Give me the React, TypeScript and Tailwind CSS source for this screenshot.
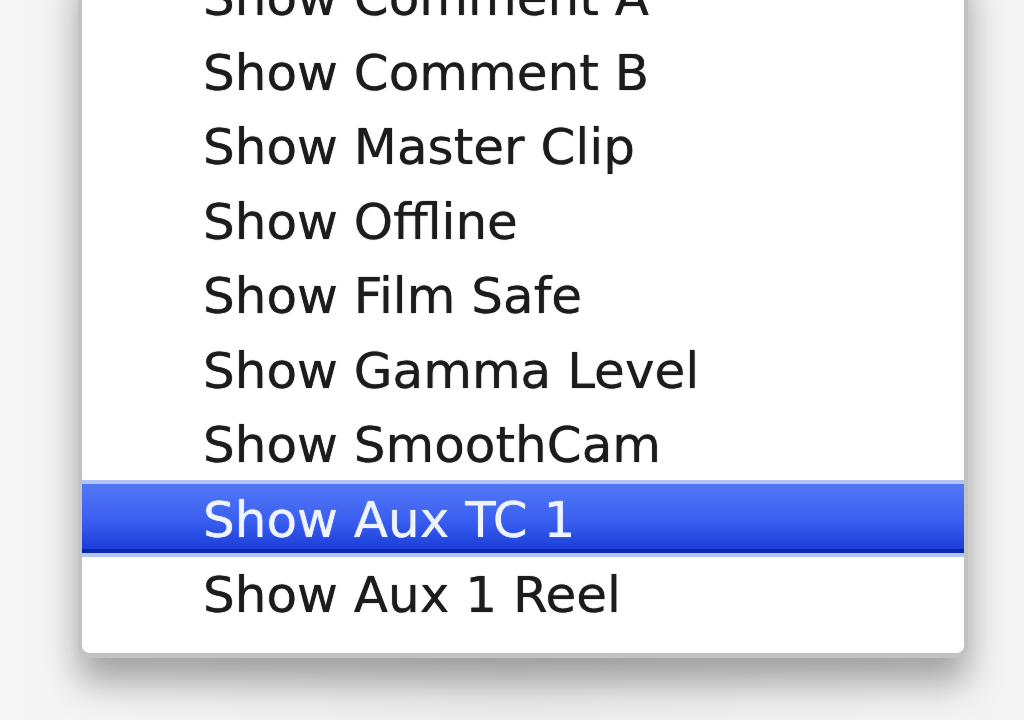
import React from 'react';

const items = [
  'Show Comment A',
  'Show Comment B',
  'Show Master Clip',
  'Show Offline',
  'Show Film Safe',
  'Show Gamma Level',
  'Show SmoothCam',
  'Show Aux TC 1',
  'Show Aux 1 Reel',
];

const selected = 'Show Aux TC 1';

const MenuRow: React.FC<{ label: string; active: boolean }> = ({ label, active }) => {
  if (active) {
    return (
      <div className="h-[77px] -my-[1px] border-y-[4px] border-y-[#b3c4f6] bg-gradient-to-b from-[#5378f6] via-[#3b60f0] to-[#1838d6] shadow-[inset_0_-4px_0_#0b28a8] flex items-center pl-[121px] pt-[4px]">
        <span className="text-[#eef3ff] blur-[0.4px] [text-shadow:0_0_1px_#eef3ff]">{label}</span>
      </div>
    );
  }
  return (
    <div className="h-[74.5px] flex items-center pl-[121px] pt-[4px]">
      <span className="text-[#1c1c1c] blur-[0.4px] [text-shadow:0_0_1px_#1c1c1c]">{label}</span>
    </div>
  );
};

export default function App() {
  return (
    <div className="w-[1024px] h-[720px] overflow-hidden bg-gradient-to-r from-[#f6f6f6] via-[#ececec] to-[#f4f4f4]">
      <div className="ml-[78px] w-[890px] -mt-[41px] bg-white border-x-[4px] border-b-[5px] border-[#c2c2c2] rounded-b-[12px] shadow-[0_24px_36px_rgba(0,0,0,0.34)] pb-[23px] font-['DejaVu_Sans',sans-serif] text-[50px] leading-none">
        {items.map((label) => (
          <MenuRow key={label} label={label} active={label === selected} />
        ))}
      </div>
    </div>
  );
}
